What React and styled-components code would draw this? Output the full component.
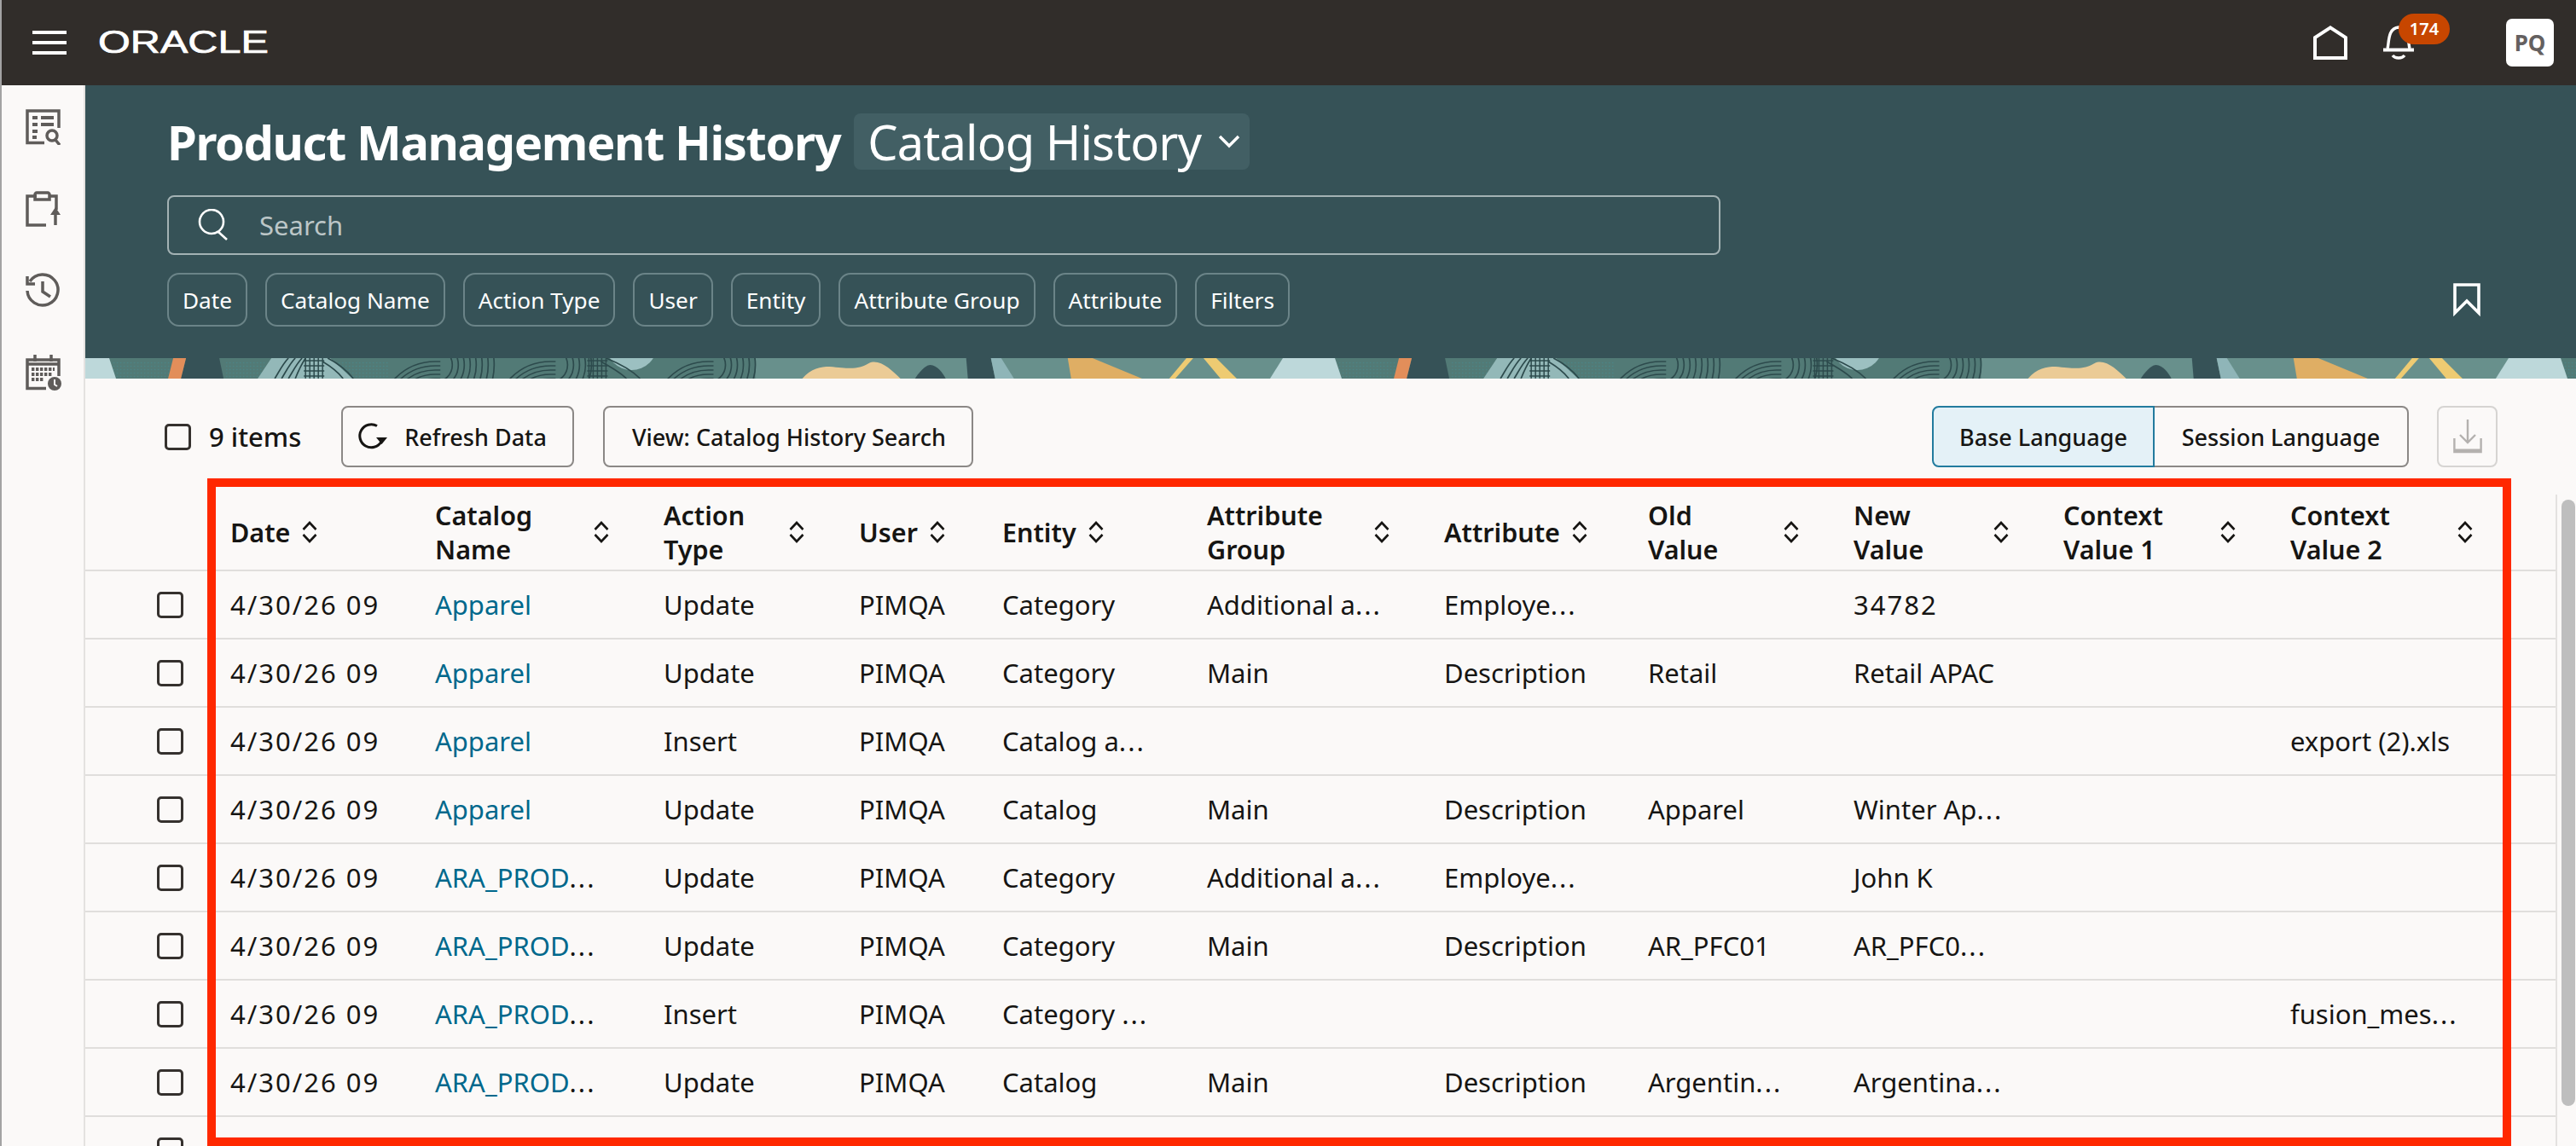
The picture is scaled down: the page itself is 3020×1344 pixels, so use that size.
import React from 'react'
import styled, { createGlobalStyle } from 'styled-components'

const GlobalStyle = createGlobalStyle`
    html, body {
        margin: 0;
        padding: 0;
        background: #fbf9f8;
    }
    * {
        box-sizing: border-box;
    }
`

const Page = styled.div`
    position: relative;
    width: 3020px;
    height: 1344px;
    overflow: hidden;
    background: #fbf9f8;
    color: #161513;
    font-family: "Noto Sans", "Open Sans", sans-serif;
    border-left: 2px solid #a3a3a3;
`

const TopBar = styled.header`
    display: flex;
    align-items: center;
    height: 100px;
    padding: 0 26px 0 36px;
    background: #312d2a;
`

const Burger = styled.div`
    display: flex;
    flex-direction: column;
    justify-content: space-between;
    width: 40px;
    height: 28px;
    margin-right: 37px;
    span {
        display: block;
        height: 4px;
        background: #fff;
    }
`

const Logo = styled.div`
    width: 200px;
    color: #fff;
    font-family: "Liberation Sans", Arial, sans-serif;
    font-size: 36px;
    line-height: 40px;
    -webkit-text-stroke: 0.7px #fff;
    transform: scaleX(1.35);
    transform-origin: left center;
`

const TopActions = styled.div`
    display: flex;
    align-items: center;
    margin-left: auto;
`

const BellWrap = styled.div`
    position: relative;
    display: flex;
    width: 36px;
    height: 40px;
    margin-left: 42px;
    margin-right: 108px;
`

const Badge = styled.span`
    position: absolute;
    left: 18px;
    top: -14px;
    width: 60px;
    height: 36px;
    border-radius: 18px;
    background: #c74600;
    color: #fff;
    font-size: 20px;
    font-weight: 600;
    line-height: 36px;
    text-align: center;
`

const Avatar = styled.div`
    width: 56px;
    height: 56px;
    border-radius: 7px;
    background: #fff;
    color: #646060;
    font-size: 26px;
    font-weight: 700;
    line-height: 56px;
    text-align: center;
`

const Body = styled.div`
    display: flex;
    height: 1244px;
`

const Rail = styled.nav`
    display: flex;
    flex-direction: column;
    flex: 0 0 98px;
    gap: 54px;
    padding: 28px 0 0 28px;
    border-right: 2px solid #e4e2e0;
    color: #5f5c5a;
`

const Main = styled.main`
    flex: 1;
    min-width: 0;
`

const Hero = styled.section`
    position: relative;
    height: 320px;
    padding: 33px 96px 0;
    background: #365257;
    color: #fff;
`

const TitleRow = styled.div`
    display: flex;
    align-items: center;
    gap: 16px;
    height: 66px;
`

const Title = styled.h1`
    margin: 0;
    font-size: 56px;
    font-weight: 700;
    letter-spacing: -1.4px;
    line-height: 66px;
    white-space: nowrap;
`

const ViewSelect = styled.div`
    display: flex;
    align-items: center;
    gap: 20px;
    width: 464px;
    height: 66px;
    padding-left: 16px;
    border-radius: 8px;
    background: #425f64;
    font-size: 56px;
    letter-spacing: -0.9px;
    line-height: 66px;
    white-space: nowrap;
`

const SearchBox = styled.div`
    display: flex;
    align-items: center;
    gap: 34px;
    width: 1821px;
    height: 70px;
    margin-top: 30px;
    padding-left: 34px;
    border: 2px solid #a3b2b4;
    border-radius: 8px;
    color: #bcc6c7;
    font-size: 31px;
`

const ChipRow = styled.div`
    display: flex;
    gap: 21px;
    margin-top: 21px;
`

const Chip = styled.div`
    display: flex;
    align-items: center;
    height: 63px;
    padding: 0 16px;
    border: 2px solid #6b8488;
    border-radius: 14px;
    font-size: 26.2px;
    white-space: nowrap;
`

const BookmarkButton = styled.div`
    position: absolute;
    left: 2776px;
    top: 232px;
    display: flex;
`

const Banner = styled.svg`
    display: block;
    width: 100%;
    height: 24px;
`

const Toolbar = styled.div`
    display: flex;
    align-items: center;
    height: 72px;
    margin: 32px 0;
    padding: 0 92px 0 93px;
`

const Check = styled.span`
    display: block;
    flex: none;
    width: 31px;
    height: 31px;
    border: 3px solid #35312e;
    border-radius: 5px;
`

const ItemCount = styled.span`
    margin: 0 47px 0 21px;
    font-size: 31px;
    font-weight: 500;
    white-space: nowrap;
`

const ToolButton = styled.button`
    display: flex;
    align-items: center;
    gap: 20px;
    height: 72px;
    margin-right: 34px;
    padding: 0 30px 0 ${p => (p.$hasIcon ? 18 : 32)}px;
    border: 2px solid #8b8886;
    border-radius: 8px;
    background: transparent;
    color: #161513;
    font-family: inherit;
    font-size: 27px;
    font-weight: 500;
    white-space: nowrap;
`

const LangGroup = styled.div`
    display: flex;
    margin-left: auto;
    margin-right: 33px;
`

const LangButton = styled.button`
    width: ${p => (p.$active ? 261 : 298)}px;
    height: 72px;
    padding: 0;
    border: 2px solid ${p => (p.$active ? '#227b9e' : '#8b8886')};
    border-left-width: ${p => (p.$active ? 2 : 0)}px;
    border-radius: ${p => (p.$active ? '8px 0 0 8px' : '0 8px 8px 0')};
    background: ${p => (p.$active ? '#e4f1f7' : 'transparent')};
    color: #161513;
    font-family: inherit;
    font-size: 27px;
    font-weight: 500;
    white-space: nowrap;
`

const DownloadButton = styled.div`
    display: flex;
    align-items: center;
    justify-content: center;
    width: 71px;
    height: 72px;
    border: 2px solid #d6d4d2;
    border-radius: 8px;
    color: #b4b1af;
`

const TableArea = styled.div`
    display: flex;
`

const Table = styled.div`
    flex: 1;
    min-width: 0;
`

const columns = '154px 240px 268px 229px 168px 240px 278px 239px 241px 246px 266px 278px'

const HeadRow = styled.div`
    display: grid;
    grid-template-columns: ${columns};
    height: 90px;
    border-bottom: 2px solid #e0dedc;
`

const HeadCell = styled.div`
    display: flex;
    align-items: center;
    justify-content: ${p => (p.$wrap ? 'space-between' : 'flex-start')};
    gap: 14px;
    padding: 0 ${p => (p.$wrap ? 48 : 0)}px 0 16px;
    font-size: 30.5px;
    font-weight: 600;
    line-height: 40px;
`

const DataRow = styled.div`
    display: grid;
    grid-template-columns: ${columns};
    align-items: center;
    height: 80px;
    border-bottom: 2px solid #e0dedc;
`

const CheckCell = styled.div`
    display: flex;
    justify-content: flex-end;
    padding-right: 39px;
`

const Cell = styled.div`
    padding-left: 16px;
    font-size: 31px;
    letter-spacing: ${p => (p.$digits ? '2px' : '0')};
    white-space: nowrap;
`

const CellLink = styled.span`
    color: #00688c;
`

const Dots = styled.span`
    letter-spacing: 2px;
`

const ScrollTrack = styled.div`
    flex: 0 0 24px;
    height: 764px;
    padding: 6px 0 0 5px;
    border-left: 2px solid #e4e2e0;
`

const ScrollThumb = styled.div`
    width: 16px;
    height: 711px;
    border-radius: 8px;
    background: #bebebe;
`

const Highlight = styled.div`
    position: absolute;
    left: 241px;
    top: 561px;
    width: 2701px;
    height: 783px;
    border: 10px solid #ff2800;
    pointer-events: none;
`

const ReportIcon = () => (
    <svg width="42" height="42" viewBox="0 0 42 42" fill="none" stroke="currentColor" strokeWidth="3.5">
        <path d="M22 39.5H2V2H39V22" />
        <path d="M8 10h6M18 10h15M8 18h6M18 18h15M8 26h6M8 33h5" strokeWidth="4" />
        <circle cx="31" cy="31" r="6" />
        <path d="M35 36l5 6" />
    </svg>
)

const ClipboardIcon = () => (
    <svg width="42" height="42" viewBox="0 0 42 42" fill="none" stroke="currentColor" strokeWidth="3.5">
        <path d="M13 6H2V40H24" />
        <path d="M27 6H36V22" />
        <path d="M11 10V4c0-1 1-2 2-2H26c1 0 2 1 2 2v6Z" />
        <path d="M35 40V24" />
        <path d="M35 19l6 9H29Z" fill="currentColor" stroke="none" />
    </svg>
)

const HistoryIcon = () => (
    <svg width="42" height="42" viewBox="0 0 42 42" fill="none" stroke="currentColor" strokeWidth="3.5">
        <path d="M5 10A18 18 0 1 1 2 21" />
        <path d="M2 4V13H11" />
        <path d="M20 10V22L29 28" />
    </svg>
)

const CalendarIcon = () => (
    <svg width="42" height="42" viewBox="0 0 42 42" fill="none" stroke="currentColor">
        <path d="M24 39.5H2V6H39V25" strokeWidth="3.5" />
        <path d="M11 0V8M30 0V8M2 11H39" strokeWidth="3.5" />
        <path d="M7 17h27M7 23h24M7 29h15" strokeWidth="4" strokeDasharray="3.4 1.6" />
        <circle cx="34" cy="34" r="8" fill="currentColor" stroke="none" />
        <path d="M34 29v6l3 2" stroke="#fbf9f8" strokeWidth="2" />
    </svg>
)

const HomeIcon = () => (
    <svg width="40" height="40" viewBox="0 0 40 40" fill="none" stroke="#fff" strokeWidth="4">
        <path d="M20 2.4L2 14V38H38V14Z" />
    </svg>
)

const BellIcon = () => (
    <svg width="36" height="40" viewBox="0 0 36 40" fill="none" stroke="#fff" strokeWidth="3.4">
        <path d="M5 27C7 20 5 3 18 2C31 3 29 20 31 27" />
        <path d="M0 28.5H36" strokeWidth="4" />
        <path d="M11 35C14 39 22 39 25 35" />
    </svg>
)

const SearchIcon = () => (
    <svg width="38" height="38" viewBox="0 0 38 38" fill="none" stroke="#fff" strokeWidth="2.6">
        <circle cx="16" cy="15" r="14" />
        <path d="M24 27l10 9" />
    </svg>
)

const ChevronIcon = () => (
    <svg width="26" height="16" viewBox="0 0 26 16" fill="none" stroke="#fff" strokeWidth="3.4">
        <path d="M2 2L13 13L24 2" />
    </svg>
)

const BookmarkIcon = () => (
    <svg width="32" height="40" viewBox="0 0 32 40" fill="none" stroke="#fff" strokeWidth="3.6">
        <path d="M2 2H30V35L16 21L2 35Z" />
    </svg>
)

const RefreshIcon = () => (
    <svg width="34" height="32" viewBox="0 0 34 32" fill="none" stroke="#161513" strokeWidth="3">
        <path d="M22 3.5A13.5 13.5 0 1 0 27 22" />
        <path d="M21 17H34L27.5 25Z" fill="#161513" stroke="none" />
    </svg>
)

const DownloadIcon = () => (
    <svg width="34" height="40" viewBox="0 0 34 40" fill="none" stroke="currentColor" strokeWidth="2.4">
        <path d="M17 0V27M8 18L17 27L26 18" />
        <path d="M1.4 22V38H32.6V22" />
        <path d="M1 36.5H33" strokeWidth="4" />
    </svg>
)

const SortGlyph = styled.svg`
    flex: none;
`

const SortIcon = () => (
    <SortGlyph width="18" height="26" viewBox="0 0 18 26" fill="none" stroke="#161513" strokeWidth="2.6">
        <path d="M1.5 10L9 2L16.5 10" />
        <path d="M1.5 16L9 24L16.5 16" />
    </SortGlyph>
)

const range = (from, to, step) => {
    const out = []
    for (let v = from; v <= to; v += step) out.push(v)
    return out
}

// a thumbprint in the banner: arcs climbing from the left, then lines bending down on the right
const Print = ({ x, maxRight }) => (
    <g fill="none" stroke="#2c4a4c" strokeWidth="1.7">
        {range(46, 70, 5).map(r => (
            <path key={r} d={`M${x - r} 70A${r} ${r} 0 0 1 ${x} ${70 - r}H${x + 6}`} />
        ))}
        {range(20, maxRight, 7).map(r => (
            <path key={r} d={`M${x} ${8 - r}A${r} ${r} 0 0 1 ${x} ${8 + r}`} />
        ))}
    </g>
)

const Hatch = ({ x }) => (
    <g fill="none" stroke="#2c4a4c" strokeWidth="1.5">
        {range(x, x + 20, 5).map(v => <path key={v} d={`M${v} 0V24`} />)}
        {range(3, 21, 6).map(v => <path key={v} d={`M${x - 2} ${v}H${x + 22}`} />)}
    </g>
)

const BannerArt = () => (
    <Banner viewBox="0 0 2918 24" preserveAspectRatio="none">
        <defs>
            <pattern id="dots" width="4" height="4" patternUnits="userSpaceOnUse">
                <circle cx="1.5" cy="1.5" r="0.8" fill="#4a8688" />
            </pattern>
            <clipPath id="printA"><rect x="330" width="155" height="24" /></clipPath>
            <clipPath id="printB"><rect x="480" width="115" height="24" /></clipPath>
            <clipPath id="printC"><rect x="670" width="118" height="24" /></clipPath>
            <pattern id="tile" width="1436" height="24" patternUnits="userSpaceOnUse">
                <rect width="1436" height="24" fill="#527a76" />
                <rect x="785" width="651" height="24" fill="#68908c" />
                <rect x="30" y="4" width="70" height="20" fill="url(#dots)" />
                <rect x="165" y="4" width="45" height="20" fill="url(#dots)" />
                <rect x="295" y="4" width="60" height="20" fill="url(#dots)" />
                <path d="M218 0H287L313 24H202Z" fill="#93b8b8" />
                <path d="M222 24C228 14 232 6 238 0M230 24C236 14 240 6 246 0M238 24C244 14 248 6 254 0M246 24C250 14 254 6 258 0" fill="none" stroke="#2c4a4c" strokeWidth="1.7" />
                <Hatch x={258} />
                <path d="M284 0C296 6 306 14 314 24M278 4C288 10 296 16 302 24" fill="none" stroke="#2c4a4c" strokeWidth="1.7" />
                <g clipPath="url(#printA)"><Print x={410} maxRight={70} /></g>
                <g clipPath="url(#printB)"><Print x={545} maxRight={48} /></g>
                <Hatch x={590} />
                <circle cx="640" cy="-16" r="30" fill="#9cc0c1" />
                <path d="M610 0C625 6 640 14 650 24M604 4C615 10 626 16 634 24" fill="none" stroke="#2c4a4c" strokeWidth="1.7" />
                <g clipPath="url(#printC)"><Print x={730} maxRight={56} /></g>
                <path d="M0 0H28L36 24H0Z" fill="#bdd8da" />
                <path d="M118 0H157L162 24H112Z" fill="#365257" />
                <path d="M103 0H118L112 24H97Z" fill="#e28e5a" />
                <path d="M840 24C850 12 862 10 872 10C895 12 905 14 918 6C930 0 945 14 955 24Z" fill="#ebcb96" />
                <path d="M972 24C980 12 986 8 990 8C998 8 1005 18 1008 24Z" fill="#365257" />
                <path d="M1032 0H1061L1066 24H1034Z" fill="#365257" />
                <path d="M1061 0H1073L1088 24H1066Z" fill="#8fb5b8" />
                <path d="M1151 0H1180L1238 24H1155Z" fill="#dfae64" />
                <path d="M1290 0H1298L1277 24H1270Z" fill="#eecb72" />
                <path d="M1310 0H1325L1349 24H1330Z" fill="#eecb72" />
                <path d="M1403 0H1436V24H1388Z" fill="#bdd8da" />
            </pattern>
        </defs>
        <rect width="2918" height="24" fill="url(#tile)" />
    </Banner>
)

const filters = ['Date', 'Catalog Name', 'Action Type', 'User', 'Entity', 'Attribute Group', 'Attribute', 'Filters']

const headers = [
    { label: 'Date' },
    { label: ['Catalog', 'Name'] },
    { label: ['Action', 'Type'] },
    { label: 'User' },
    { label: 'Entity' },
    { label: ['Attribute', 'Group'] },
    { label: 'Attribute' },
    { label: ['Old', 'Value'] },
    { label: ['New', 'Value'] },
    { label: ['Context', 'Value 1'] },
    { label: ['Context', 'Value 2'] },
]

const rows = [
    ['Apparel', 'Update', 'PIMQA', 'Category', 'Additional a...', 'Employe...', '', '34782', '', ''],
    ['Apparel', 'Update', 'PIMQA', 'Category', 'Main', 'Description', 'Retail', 'Retail APAC', '', ''],
    ['Apparel', 'Insert', 'PIMQA', 'Catalog a...', '', '', '', '', '', 'export (2).xls'],
    ['Apparel', 'Update', 'PIMQA', 'Catalog', 'Main', 'Description', 'Apparel', 'Winter Ap...', '', ''],
    ['ARA_PROD...', 'Update', 'PIMQA', 'Category', 'Additional a...', 'Employe...', '', 'John K', '', ''],
    ['ARA_PROD...', 'Update', 'PIMQA', 'Category', 'Main', 'Description', 'AR_PFC01', 'AR_PFC0...', '', ''],
    ['ARA_PROD...', 'Insert', 'PIMQA', 'Category ...', '', '', '', '', '', 'fusion_mes...'],
    ['ARA_PROD...', 'Update', 'PIMQA', 'Catalog', 'Main', 'Description', 'Argentin...', 'Argentina...', '', ''],
]

// splits the trailing dots off a cut value so they can be spaced as in the app
const splitDots = value => (value.endsWith('...') ? [value.slice(0, -3), '...'] : [value, ''])

const Value = ({ value }) => {
    const [text, dots] = splitDots(value)
    return <Cell $digits={/^\d+$/.test(value)}>{text}{dots && <Dots>{dots}</Dots>}</Cell>
}

const LinkValue = ({ value }) => {
    const [text, dots] = splitDots(value)
    return <Cell><CellLink>{text}</CellLink>{dots && <Dots>{dots}</Dots>}</Cell>
}

export default function App() {
    return (
        <Page>
            <GlobalStyle />
            <TopBar>
                <Burger><span /><span /><span /></Burger>
                <Logo>ORACLE</Logo>
                <TopActions>
                    <HomeIcon />
                    <BellWrap>
                        <BellIcon />
                        <Badge>174</Badge>
                    </BellWrap>
                    <Avatar>PQ</Avatar>
                </TopActions>
            </TopBar>
            <Body>
                <Rail>
                    <ReportIcon />
                    <ClipboardIcon />
                    <HistoryIcon />
                    <CalendarIcon />
                </Rail>
                <Main>
                    <Hero>
                        <TitleRow>
                            <Title>Product Management History</Title>
                            <ViewSelect>Catalog History <ChevronIcon /></ViewSelect>
                        </TitleRow>
                        <SearchBox><SearchIcon />Search</SearchBox>
                        <ChipRow>
                            {filters.map(f => <Chip key={f}>{f}</Chip>)}
                        </ChipRow>
                        <BookmarkButton><BookmarkIcon /></BookmarkButton>
                    </Hero>
                    <BannerArt />
                    <Toolbar>
                        <Check />
                        <ItemCount>9 items</ItemCount>
                        <ToolButton $hasIcon><RefreshIcon />Refresh Data</ToolButton>
                        <ToolButton>View: Catalog History Search</ToolButton>
                        <LangGroup>
                            <LangButton $active>Base Language</LangButton>
                            <LangButton>Session Language</LangButton>
                        </LangGroup>
                        <DownloadButton><DownloadIcon /></DownloadButton>
                    </Toolbar>
                    <TableArea>
                        <Table>
                            <HeadRow>
                                <div />
                                {headers.map(h => {
                                    const wrap = Array.isArray(h.label)
                                    return (
                                        <HeadCell key={String(h.label)} $wrap={wrap}>
                                            <span>{wrap ? <>{h.label[0]}<br />{h.label[1]}</> : h.label}</span>
                                            <SortIcon />
                                        </HeadCell>
                                    )
                                })}
                            </HeadRow>
                            {rows.map((row, i) => (
                                <DataRow key={i}>
                                    <CheckCell><Check /></CheckCell>
                                    <Cell $digits>4/30/26 09</Cell>
                                    <LinkValue value={row[0]} />
                                    {row.slice(1).map((value, j) => <Value key={j} value={value} />)}
                                </DataRow>
                            ))}
                            <DataRow>
                                <CheckCell><Check /></CheckCell>
                            </DataRow>
                        </Table>
                        <ScrollTrack><ScrollThumb /></ScrollTrack>
                    </TableArea>
                </Main>
            </Body>
            <Highlight />
        </Page>
    )
}
